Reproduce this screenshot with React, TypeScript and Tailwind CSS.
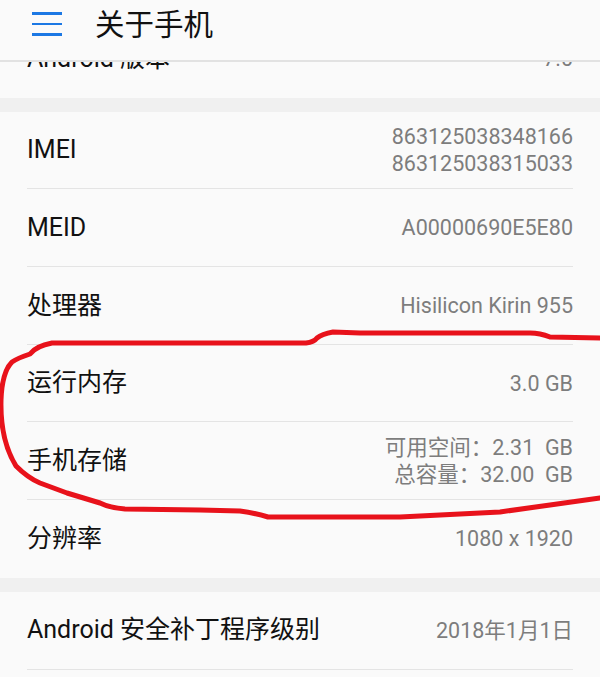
import React from "react"

const font = { fontFamily: 'Roboto, "Noto Sans CJK SC", sans-serif' }

type Item = { label: string; value: string[] }

const cardItems: Item[] = [
  { label: "IMEI", value: ["863125038348166", "863125038315033"] },
  { label: "MEID", value: ["A00000690E5E80"] },
  { label: "处理器", value: ["Hisilicon Kirin 955"] },
  { label: "运行内存", value: ["3.0 GB"] },
  { label: "手机存储", value: ["可用空间：2.31  GB", "总容量：32.00  GB"] },
  { label: "分辨率", value: ["1080 x 1920"] },
]

function Row({ item, last }: { item: Item; last?: boolean }) {
  return (
    <div className={`mx-[27px] flex h-[77.7px] items-center justify-between ${last ? "" : "border-b border-[#e4e4e4]"}`}>
      <span className="text-[25px] text-[#111]">{item.label}</span>
      <div className="flex flex-col items-end text-[21.5px] leading-[27px] text-[#7d7d7d] whitespace-pre">
        {item.value.map((v) => (
          <span key={v}>{v}</span>
        ))}
      </div>
    </div>
  )
}

export default function App() {
  return (
    <div className="relative h-[677px] w-[600px] overflow-hidden bg-[#fafafa]" style={font}>
      {/* header */}
      <div className="relative z-10 flex h-[62px] items-center border-b-2 border-[#e2e2e2] bg-[#fafafa]">
        <div className="ml-[32px] flex w-[30px] flex-col gap-[8px] pb-[12px]">
          <div className="h-[2.5px] bg-[#1c78e4]" />
          <div className="h-[2.5px] bg-[#1c78e4]" />
          <div className="h-[2.5px] bg-[#1c78e4]" />
        </div>
        <span className="ml-[33px] pb-[10px] text-[29.5px] text-[#111]">关于手机</span>
      </div>

      {/* scrolled content */}
      <div className="-mt-[42px]">
        <Row item={{ label: "Android 版本", value: ["7.0"] }} last />
        <div className="h-[14px] bg-[#f0f0f0]" />
        {cardItems.map((item, i) => (
          <Row key={item.label} item={item} last={i === cardItems.length - 1} />
        ))}
        <div className="h-[14px] bg-[#f0f0f0]" />
        <Row item={{ label: "Android 安全补丁程序级别", value: ["2018年1月1日"] }} />
      </div>

      {/* red hand-drawn annotation */}
      <svg className="pointer-events-none absolute left-0 top-0" width="600" height="677" viewBox="0 0 600 677">
        <path
          d="M600,338 L550,337 Q540,333 530,333 L360,333 L333,332 Q322,334 317,338 Q314,342 306,343 L52,343 Q36,346 30,354 Q18,358 12,362 Q2,372 1,400 Q0,440 16,466 Q28,478 40,483 L67,493 L100,503 Q110,508 125,509 L200,510 L240,511 Q255,513 268,517 L400,517 L500,512 L550,505 L600,498"
          fill="none"
          stroke="#e8121b"
          strokeWidth="5"
          strokeLinejoin="round"
          strokeLinecap="round"
        />
      </svg>
    </div>
  )
}
